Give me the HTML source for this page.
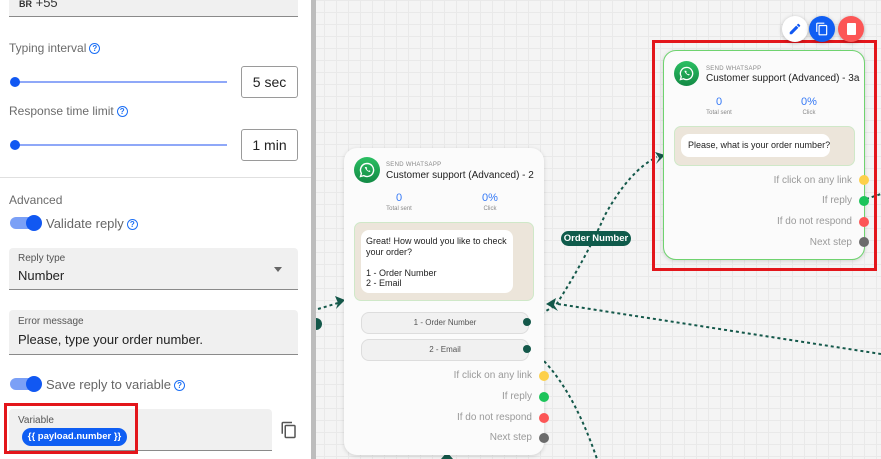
<!DOCTYPE html>
<html><head><meta charset="utf-8"><style>
*{box-sizing:border-box;margin:0;padding:0}
body{width:881px;height:459px;overflow:hidden;position:relative;font-family:"Liberation Sans",sans-serif;background:#f4f4f4;
background-image:linear-gradient(#e9e9e9 1px,transparent 1px),linear-gradient(90deg,#e9e9e9 1px,transparent 1px);background-size:12px 12px}
.a{position:absolute}
.panel{left:0;top:0;width:311px;height:459px;background:#fff}
.sb{left:311px;top:0;width:5px;height:459px;background:#bdbdbd}
.lbl{font-size:12px;color:#6b6b6b}
.q{display:inline-block;width:11px;height:11px;border:1.3px solid #1a6ef5;border-radius:50%;font-size:8px;line-height:9px;text-align:center;color:#1a6ef5;vertical-align:1px;margin-left:3px;font-weight:bold}
.fld{background:#f0f0f0;border-bottom:1px solid #8a8a8a;border-radius:4px 4px 0 0}
.sl{height:2px;background:#8fa8f8}
.dot{width:10px;height:10px;border-radius:50%;background:#1158f2}
.box{border:1px solid #9a9a9a;border-radius:3px;font-size:14px;color:#222;text-align:center;line-height:30px}
.tg{width:30px;height:12px;border-radius:6px;background:#7ba0f6}
.tg::after{content:"";position:absolute;right:-2px;top:-2px;width:16px;height:16px;border-radius:50%;background:#1158f2}
.card{background:#fbfbfb;border-radius:13px;box-shadow:0 1px 4px rgba(0,0,0,.15)}
.wa{width:26px;height:26px;border-radius:50%;background:linear-gradient(#2bbf63,#138a45)}
.sm{font-size:6px;color:#888;letter-spacing:.3px}
.ttl{font-size:10px;color:#222}
.num{font-size:11px;color:#3579f6;text-align:center}
.sub{font-size:6px;color:#888;text-align:center}
.msg{background:#ece5da;border:1px solid #cfe8c8;border-radius:7px}
.bub{background:#fff;border-radius:8px;font-size:9px;color:#222;line-height:10.5px;padding:6px 5px}
.btn{background:#f1f1f1;border:1px solid #ddd;border-radius:8px;font-size:8px;color:#555;text-align:center;line-height:20px}
.out{font-size:10px;color:#9a9a9a;text-align:right}
.od{width:10px;height:10px;border-radius:50%}
</style></head><body>
<svg class="a" style="left:0;top:0" width="881" height="459">
<g fill="none" stroke="#14584a" stroke-width="2" stroke-dasharray="3 3">
<path d="M531 320 L556 305 Q585 260 605 215 Q630 170 657 157"/>
<path d="M558 304 L881 354"/>
<path d="M531 349 Q570 380 597 459"/>
<path d="M318 309 L338 303"/>
<path d="M866 199 L881 194"/>
</g>
<path d="M546 304 L556 298 L554 305 L558 311Z" fill="#14584a"/>
<path d="M665 155 L655 152 L659 158 L656 164Z" fill="#14584a"/>
<path d="M345 300 L335 296 L338 303 L336 309Z" fill="#14584a"/>
<circle cx="316" cy="324" r="6" fill="#14584a"/>
<path d="M441 459 L447 452 L453 459Z" fill="#14584a"/>
</svg>
<div class="a panel"></div>
<div class="a sb"></div>
<div class="a fld" style="left:9px;top:-10px;width:289px;height:27px"></div>
<div class="a" style="left:19px;top:-5px;font-size:13px;color:#333"><span style="font-size:9px;font-weight:bold">BR</span> +55</div>
<div class="a lbl" style="left:9px;top:41px">Typing interval<span class="q">?</span></div>
<div class="a sl" style="left:15px;top:81px;width:212px"></div>
<div class="a dot" style="left:10px;top:77px"></div>
<div class="a box" style="left:241px;top:66px;width:57px;height:32px">5 sec</div>
<div class="a lbl" style="left:9px;top:104px">Response time limit<span class="q">?</span></div>
<div class="a sl" style="left:15px;top:144px;width:212px"></div>
<div class="a dot" style="left:10px;top:140px"></div>
<div class="a box" style="left:241px;top:129px;width:57px;height:32px">1 min</div>
<div class="a" style="left:0;top:177px;width:311px;height:1px;background:#e0e0e0"></div>
<div class="a lbl" style="left:9px;top:193px">Advanced</div>
<div class="a tg" style="left:10px;top:217px"></div>
<div class="a" style="left:46px;top:216px;font-size:13px;color:#666">Validate reply<span class="q">?</span></div>
<div class="a fld" style="left:9px;top:248px;width:289px;height:42px"></div>
<div class="a" style="left:18px;top:253px;font-size:10px;color:#555">Reply type</div>
<div class="a" style="left:18px;top:268px;font-size:13px;color:#222">Number</div>
<div class="a" style="left:274px;top:267px;width:0;height:0;border:4px solid transparent;border-top:5px solid #666"></div>
<div class="a fld" style="left:9px;top:310px;width:289px;height:45px"></div>
<div class="a" style="left:18px;top:316px;font-size:10px;color:#555">Error message</div>
<div class="a" style="left:18px;top:332px;font-size:13px;color:#222">Please, type your order number.</div>
<div class="a tg" style="left:10px;top:378px"></div>
<div class="a" style="left:46px;top:377px;font-size:13px;color:#666">Save reply to variable<span class="q">?</span></div>
<div class="a fld" style="left:9px;top:409px;width:263px;height:42px"></div>
<div class="a" style="left:18px;top:415px;font-size:10px;color:#555">Variable</div>
<div class="a" style="left:22px;top:428px;width:105px;height:18px;border-radius:9px;background:#0f5ef3;color:#fff;font-size:9.5px;font-weight:bold;text-align:center;line-height:18px">{{ payload.number }}</div>
<div class="a" style="left:4px;top:403px;width:134px;height:51px;border:3px solid #e3161b"></div>
<svg class="a" style="left:280px;top:421px" width="18" height="18" viewBox="0 0 24 24"><path d="M16 1H4c-1.1 0-2 .9-2 2v14h2V3h12V1zm3 4H8c-1.1 0-2 .9-2 2v14c0 1.1.9 2 2 2h11c1.1 0 2-.9 2-2V7c0-1.1-.9-2-2-2zm0 16H8V7h11v14z" fill="#555"/></svg>

<!-- card 2 -->
<div class="a card" style="left:344px;top:148px;width:200px;height:307px"></div>
<div class="a wa" style="left:354px;top:157px"></div>
<svg class="a" style="left:359px;top:162px" width="16" height="16" viewBox="0 0 16 16"><path d="M8 1.5a6.5 6.5 0 0 0-5.6 9.8L1.5 14.5l3.3-.9A6.5 6.5 0 1 0 8 1.5z" fill="none" stroke="#fff" stroke-width="1.4"/><path d="M5.8 5c.3 1.9 2.6 4.7 4.9 5l.8-1-1.2-.6-.6.5c-.8-.4-1.6-1.2-2-2l.5-.6-.6-1.2z" fill="#fff"/></svg>
<div class="a sm" style="left:386px;top:162px">SEND WHATSAPP</div>
<div class="a ttl" style="left:386px;top:170px">Customer support (Advanced) - 2</div>
<div class="a num" style="left:379px;top:192px;width:40px">0</div>
<div class="a sub" style="left:379px;top:206px;width:40px">Total sent</div>
<div class="a num" style="left:470px;top:192px;width:40px">0%</div>
<div class="a sub" style="left:470px;top:206px;width:40px">Click</div>
<div class="a msg" style="left:354px;top:222px;width:180px;height:79px"></div>
<div class="a bub" style="left:361px;top:230px;width:152px;height:63px;white-space:nowrap">Great! How would you like to check<br>your order?<br><br>1 - Order Number<br>2 - Email</div>
<div class="a btn" style="left:361px;top:312px;width:168px;height:22px">1 - Order Number</div>
<div class="a btn" style="left:361px;top:339px;width:168px;height:22px">2 - Email</div>
<div class="a od" style="left:523px;top:318px;width:8px;height:8px;background:#14584a"></div>
<div class="a od" style="left:523px;top:345px;width:8px;height:8px;background:#14584a"></div>
<div class="a out" style="left:400px;top:370px;width:132px">If click on any link</div>
<div class="a out" style="left:400px;top:391px;width:132px">If reply</div>
<div class="a out" style="left:400px;top:412px;width:132px">If do not respond</div>
<div class="a out" style="left:400px;top:432px;width:132px">Next step</div>
<div class="a od" style="left:539px;top:371px;background:#fdd04a"></div>
<div class="a od" style="left:539px;top:392px;background:#1cc45a"></div>
<div class="a od" style="left:539px;top:413px;background:#fc5656"></div>
<div class="a od" style="left:539px;top:433px;background:#6b6b6b"></div>

<div class="a" style="left:561px;top:231px;width:70px;height:15px;border-radius:8px;background:#0f5b4b;color:#fff;font-size:9.5px;font-weight:bold;text-align:center;line-height:15px">Order Number</div>

<!-- card 3 -->
<div class="a card" style="left:663px;top:50px;width:202px;height:210px;border:1.5px solid #6fd36f"></div>
<div class="a wa" style="left:674px;top:61px;width:25px;height:25px"></div>
<svg class="a" style="left:679px;top:66px" width="15" height="15" viewBox="0 0 16 16"><path d="M8 1.5a6.5 6.5 0 0 0-5.6 9.8L1.5 14.5l3.3-.9A6.5 6.5 0 1 0 8 1.5z" fill="none" stroke="#fff" stroke-width="1.4"/><path d="M5.8 5c.3 1.9 2.6 4.7 4.9 5l.8-1-1.2-.6-.6.5c-.8-.4-1.6-1.2-2-2l.5-.6-.6-1.2z" fill="#fff"/></svg>
<div class="a sm" style="left:706px;top:66px">SEND WHATSAPP</div>
<div class="a ttl" style="left:706px;top:73px">Customer support (Advanced) - 3a</div>
<div class="a num" style="left:699px;top:96px;width:40px">0</div>
<div class="a sub" style="left:699px;top:110px;width:40px">Total sent</div>
<div class="a num" style="left:789px;top:96px;width:40px">0%</div>
<div class="a sub" style="left:789px;top:110px;width:40px">Click</div>
<div class="a msg" style="left:674px;top:126px;width:181px;height:40px"></div>
<div class="a bub" style="left:681px;top:134px;width:149px;height:23px;padding:6px 7px;white-space:nowrap">Please, what is your order number?</div>
<div class="a out" style="left:720px;top:175px;width:132px">If click on any link</div>
<div class="a out" style="left:720px;top:195px;width:132px">If reply</div>
<div class="a out" style="left:720px;top:216px;width:132px">If do not respond</div>
<div class="a out" style="left:720px;top:237px;width:132px">Next step</div>
<div class="a od" style="left:859px;top:175px;background:#fdd04a"></div>
<div class="a od" style="left:859px;top:196px;background:#1cc45a"></div>
<div class="a od" style="left:859px;top:217px;background:#fc5656"></div>
<div class="a od" style="left:859px;top:237px;background:#6b6b6b"></div>
<div class="a" style="left:652px;top:40px;width:225px;height:231px;border:3px solid #e3161b"></div>

<div class="a" style="left:782px;top:16px;width:26px;height:26px;border-radius:50%;background:#fff;box-shadow:0 1px 4px rgba(0,0,0,.25)"></div>
<svg class="a" style="left:788px;top:22px" width="14" height="14" viewBox="0 0 24 24"><path d="M3 17.25V21h3.75L17.8 9.94l-3.75-3.75L3 17.25zM20.7 7.04a1 1 0 0 0 0-1.410l-2.34-2.34a1 1 0 0 0-1.41 0l-1.83 1.83 3.75 3.75 1.83-1.83z" fill="#1158f2"/></svg>
<div class="a" style="left:809px;top:16px;width:26px;height:26px;border-radius:50%;background:#0f5ef3;box-shadow:0 1px 4px rgba(0,0,0,.25)"></div>
<svg class="a" style="left:815px;top:22px" width="14" height="14" viewBox="0 0 24 24"><path d="M16 1H4c-1.1 0-2 .9-2 2v14h2V3h12V1zm3 4H8c-1.1 0-2 .9-2 2v14c0 1.1.9 2 2 2h11c1.1 0 2-.9 2-2V7c0-1.1-.9-2-2-2zm0 16H8V7h11v14z" fill="#fff"/></svg>
<div class="a" style="left:838px;top:16px;width:26px;height:26px;border-radius:50%;background:#fc5656;box-shadow:0 1px 4px rgba(0,0,0,.25)"></div>
<div class="a" style="left:847px;top:23px;width:9px;height:12px;background:#fff;border-radius:1px"></div>
</body></html>
